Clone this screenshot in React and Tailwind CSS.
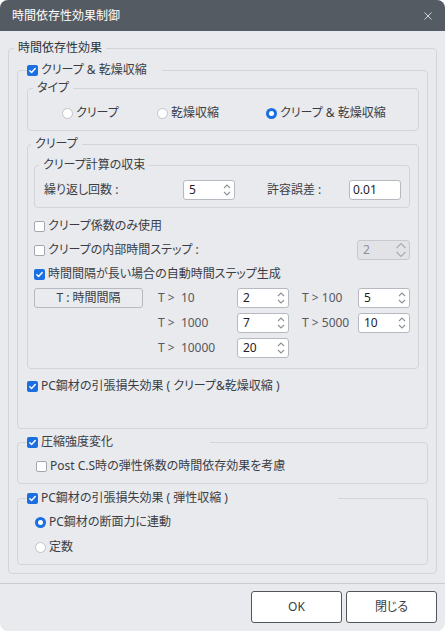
import React from 'react';

// Small form controls used throughout the dialog

function Check({ on }) {
  if (on) {
    return (
      <span className="flex h-[11px] w-[11px] shrink-0 items-center justify-center rounded-[2px] bg-[#1b6fe2]">
        <svg viewBox="0 0 10 10" className="h-[9px] w-[9px]">
          <path d="M2 5.3l2 2 4-4.5" fill="none" stroke="#fff" strokeWidth="1.6" strokeLinecap="round" strokeLinejoin="round" />
        </svg>
      </span>
    );
  }
  return <span className="h-[11px] w-[11px] shrink-0 rounded-[2px] border border-[#a3a8ae] bg-white" />;
}

function Radio({ on }) {
  if (on) {
    return (
      <span className="flex h-[11px] w-[11px] shrink-0 items-center justify-center rounded-full bg-[#1b6fe2]">
        <span className="h-[5px] w-[5px] rounded-full bg-white" />
      </span>
    );
  }
  return <span className="h-[11px] w-[11px] shrink-0 rounded-full border border-[#bfc3c8] bg-white" />;
}

function Spin({ value, disabled }) {
  if (disabled) {
    return (
      <div className="flex h-5 w-[53px] items-center rounded-[3px] border border-[#c6c9ce] bg-[#e2e3e7] pl-[5px] pr-[2px] text-[#8e9197]">
        <span className="flex-1">{value}</span>
        <svg viewBox="0 0 12 16" className="h-4 w-3">
          <path d="M1.5 6L6 1.5 10.5 6M1.5 10L6 14.5 10.5 10" fill="none" stroke="#a9adb3" strokeWidth="1.2" />
        </svg>
      </div>
    );
  }
  return (
    <div className="flex h-5 w-[52px] items-center rounded-[3px] border border-[#b6bac0] bg-white pl-[5px] pr-[3px] text-[#1f2226]">
      <span className="flex-1">{value}</span>
      <svg viewBox="0 0 8 14" className="h-[14px] w-2">
        <path d="M1 5l3-3 3 3M1 9l3 3 3-3" fill="none" stroke="#8b9097" strokeWidth="1.1" />
      </svg>
    </div>
  );
}

function CheckRow({ on, children, className = '' }) {
  return (
    <div className={`flex items-center gap-[3px] ${className}`}>
      <Check on={on} />
      <span>{children}</span>
    </div>
  );
}

function RadioRow({ on, children, className = '' }) {
  return (
    <div className={`flex items-center gap-[3px] ${className}`}>
      <Radio on={on} />
      <span>{children}</span>
    </div>
  );
}

const steps = [
  { label: 'T >  10', value: '2' },
  { label: 'T > 100', value: '5' },
  { label: 'T >  1000', value: '7' },
  { label: 'T > 5000', value: '10' },
  { label: 'T >  10000', value: '20' },
];

export default function App() {
  return (
    <div className="h-[631px] w-[445px] overflow-hidden rounded-[8px] bg-[#e9eaee] font-['Noto_Sans','Noto_Sans_CJK_JP',sans-serif] text-[12px] leading-4 text-[#3a3d43] [font-feature-settings:'palt']">
      {/* Title bar */}
      <div className="flex h-[31px] items-center justify-between bg-[#555b63] pl-3 pr-[13px] text-white">
        <span>時間依存性効果制御</span>
        <svg viewBox="0 0 8 8" className="h-2 w-2">
          <path d="M0.5 0.5l7 7M7.5 0.5l-7 7" stroke="#d3d6da" strokeWidth="1" />
        </svg>
      </div>

      <div className="px-2 pt-[9px]">
        <fieldset className="rounded-[4px] border border-[#d1d4d9] px-2 pb-2 pt-1.5">
          <legend className="-ml-[3px] px-1 text-[#2f3237]">時間依存性効果</legend>

          {/* Creep & shrinkage */}
          <fieldset className="rounded-[4px] border border-[#d1d4d9] pb-[34px] pl-[9px] pr-2 pt-0.5">
            <legend className="w-[135px]">
              <CheckRow on>クリープ &amp; 乾燥収縮</CheckRow>
            </legend>

            <fieldset className="rounded-[4px] border border-[#d1d4d9] pb-[9px] pl-[5px] pt-[9px]">
              <legend className="px-1">タイプ</legend>
              <div className="flex h-4 items-center pl-[29px]">
                <RadioRow className="w-[95px]">クリープ</RadioRow>
                <RadioRow className="w-[109px]">乾燥収縮</RadioRow>
                <RadioRow on>クリープ &amp; 乾燥収縮</RadioRow>
              </div>
            </fieldset>

            <fieldset className="mt-[5px] rounded-[4px] border border-[#d1d4d9] pb-[10px] pl-1.5 pr-2 pt-[5px]">
              <legend className="-ml-[3px] px-1">クリープ</legend>

              <fieldset className="rounded-[4px] border border-[#d1d4d9] pb-[7px] pl-[9px] pt-[7px]">
                <legend className="-ml-[5px] px-1">クリープ計算の収束</legend>
                <div className="flex items-center">
                  <span className="w-[139px]">繰り返し回数 :</span>
                  <Spin value="5" />
                  <span className="ml-8 w-[82px]">許容誤差 :</span>
                  <div className="flex h-5 w-[52px] items-center rounded-[3px] border border-[#b6bac0] bg-white pl-[3px] text-[#1f2226]">
                    0.01
                  </div>
                </div>
              </fieldset>

              <div className="mt-2 flex flex-col gap-1">
                <CheckRow className="h-5">クリープ係数のみ使用</CheckRow>
                <div className="flex h-5 items-center justify-between">
                  <CheckRow>クリープの内部時間ステップ :</CheckRow>
                  <Spin value="2" disabled />
                </div>
                <CheckRow on className="h-5">時間間隔が長い場合の自動時間ステップ生成</CheckRow>
              </div>

              <div className="mt-1 flex items-start">
                <div className="flex h-5 w-[109px] items-center justify-center rounded-[3px] border border-[#b6bac0] bg-[#eaebee]">
                  T : 時間間隔
                </div>
                <div className="ml-[15px] grid grid-cols-[79px_52px_69px_52px] items-center gap-y-[5px] text-[#55585e]">
                  {steps.map((s, i) => (
                    <React.Fragment key={s.label}>
                      <span className={`whitespace-pre ${i % 2 === 1 ? 'pl-[13px]' : ''}`}>{s.label}</span>
                      <Spin value={s.value} />
                    </React.Fragment>
                  ))}
                </div>
              </div>
            </fieldset>

            <CheckRow on className="mt-[9px] h-4">PC鋼材の引張損失効果 ( クリープ&amp;乾燥収縮 )</CheckRow>
          </fieldset>

          {/* Compressive strength */}
          <fieldset className="mt-[5px] rounded-[4px] border border-[#d1d4d9] pb-[9px] pl-[18px] pt-2">
            <legend className="-ml-[9px] w-[183px]">
              <CheckRow on>圧縮強度変化</CheckRow>
            </legend>
            <CheckRow className="h-4">Post C.S時の弾性係数の時間依存効果を考慮</CheckRow>
          </fieldset>

          {/* Elastic shortening */}
          <fieldset className="mt-1.5 rounded-[4px] border border-[#d1d4d9] pb-[7px] pl-[17px] pt-1.5">
            <legend className="-ml-[8px] w-[311px]">
              <CheckRow on>PC鋼材の引張損失効果 ( 弾性収縮 )</CheckRow>
            </legend>
            <div className="flex flex-col gap-[5px]">
              <RadioRow on className="h-5">PC鋼材の断面力に連動</RadioRow>
              <RadioRow className="h-5">定数</RadioRow>
            </div>
          </fieldset>
        </fieldset>
      </div>

      {/* Footer buttons */}
      <div className="mt-[9px] flex justify-end gap-1 border-t border-[#c9ccd1] px-2 pt-[7px]">
        <button className="h-8 w-[91px] rounded-[3px] border border-[#51565d] bg-white text-[#3a3d43]">OK</button>
        <button className="h-8 w-[91px] rounded-[3px] border border-[#51565d] bg-white text-[#3a3d43]">閉じる</button>
      </div>
    </div>
  );
}
